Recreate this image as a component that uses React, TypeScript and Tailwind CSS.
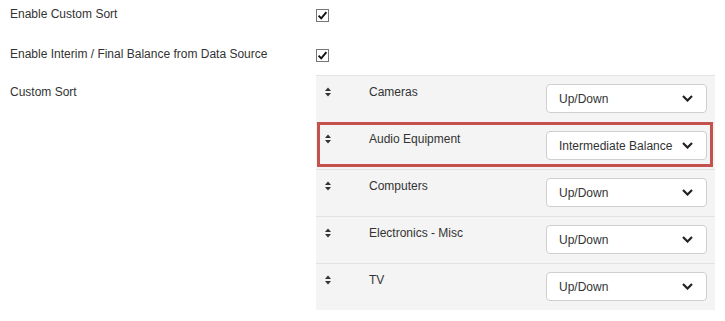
import React from 'react';

const rows = [
  { name: 'Cameras', value: 'Up/Down' },
  { name: 'Audio Equipment', value: 'Intermediate Balance', highlight: true },
  { name: 'Computers', value: 'Up/Down' },
  { name: 'Electronics - Misc', value: 'Up/Down' },
  { name: 'TV', value: 'Up/Down' },
];

const Checkbox: React.FC = () => (
  <svg width="13" height="13" viewBox="0 0 13 13" className="block">
    <rect x="0.5" y="0.5" width="12" height="12" fill="#fff" stroke="#767676" />
    <path d="M2.6 6.6 L5.2 9.3 L10.4 3.2" fill="none" stroke="#111" strokeWidth="1.9" />
  </svg>
);

const SortIcon: React.FC = () => (
  <svg width="6" height="10" viewBox="0 0 6 10" className="block">
    <path d="M0 4 L3 0.5 L6 4 Z" fill="#333" />
    <path d="M0 6 L6 6 L3 9.5 Z" fill="#333" />
  </svg>
);

const Chevron: React.FC = () => (
  <svg width="11" height="7" viewBox="0 0 11 7" className="block">
    <path d="M1 1 L5.5 5.5 L10 1" fill="none" stroke="#222" strokeWidth="2.2" />
  </svg>
);

const App: React.FC = () => {
  return (
    <div className="bg-white min-h-screen pl-[10px] font-['Liberation_Sans',Arial,sans-serif] text-[12px] leading-[14px] text-[#333]">
      {/* checkbox settings */}
      <div className="flex items-center pt-[7px] h-[40px] items-start">
        <div className="w-[306px]">Enable Custom Sort</div>
        <div className="pt-[2px]">
          <Checkbox />
        </div>
      </div>
      <div className="flex pt-[7px] h-[35px] items-start">
        <div className="w-[306px]">Enable Interim / Final Balance from Data Source</div>
        <div className="pt-[2px]">
          <Checkbox />
        </div>
      </div>

      {/* custom sort list */}
      <div className="flex items-start">
        <div className="w-[306px] pt-[10px]">Custom Sort</div>
        <div className="w-[399px] bg-[#f4f4f4]">
          {rows.map((row) => (
            <div
              key={row.name}
              className="relative flex items-start h-[47px] border-t border-[#e2e2e2]"
            >
              <div className="w-[53px] pl-[9px] pt-[11px]">
                <SortIcon />
              </div>
              <div className="w-[177px] pt-[9px]">{row.name}</div>
              <div className="mt-[8px] w-[161px] h-[29px] flex items-center justify-between bg-white border border-[#cfcfcf] rounded-[4px] pl-[12px] pr-[13px]">
                <span>{row.value}</span>
                <Chevron />
              </div>
              {row.highlight && (
                <div className="absolute left-[1px] right-[2px] -top-[1px] bottom-[2px] border-[3px] border-[#c4514e]" />
              )}
            </div>
          ))}
        </div>
      </div>
    </div>
  );
};

export default App;
